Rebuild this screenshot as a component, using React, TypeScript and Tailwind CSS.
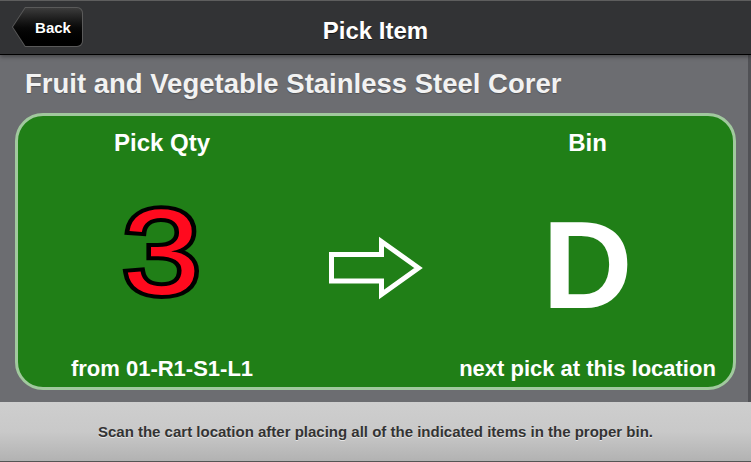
import React from "react";

export default function App() {
  return (
    <div className="w-[751px] h-[462px] flex flex-col overflow-hidden bg-[#6c6d71] font-['Liberation_Sans',Arial,sans-serif]">
      {/* Header */}
      <header className="h-[55px] shrink-0 bg-[#323335] border-t border-t-[#5e5e5e] border-b border-b-black grid grid-cols-[1fr_auto_1fr] shadow-[0_2px_4px_rgba(0,0,0,0.35)] relative z-10">
        <div className="pl-[12px] pt-[6px]">
          <div className="h-[40px] w-[71px] p-px bg-[#5a5a5a] rounded-r-[6px] [clip-path:polygon(13px_0,100%_0,100%_100%,13px_100%,0_50%)]">
            <div className="h-full w-full rounded-r-[5px] bg-gradient-to-b from-[#3c3c3c] via-[#0a0a0a] to-black [clip-path:polygon(12.4px_0,100%_0,100%_100%,12.4px_100%,0_50%)] flex items-center justify-center pl-[11px]">
              <span className="text-white font-bold text-[15px] leading-none [text-shadow:0_1px_0_#000]">Back</span>
            </div>
          </div>
        </div>
        <div className="pt-[16px]">
          <h1 className="text-white font-bold text-[24px] leading-[28px] [text-shadow:0_1px_0_#111]">Pick Item</h1>
        </div>
        <div />
      </header>

      {/* Main */}
      <main className="flex-1 border-r-[3px] border-r-[#505155] flex flex-col">
        <h2 className="pt-[14px] pl-[25px] text-[#f2f2f2] font-bold text-[27.5px] leading-[30px] whitespace-nowrap [text-shadow:0_1px_1px_rgba(0,0,0,0.25)]">
          Fruit and Vegetable Stainless Steel Corer
        </h2>
        <div className="mt-[14px] ml-[15px] w-[721px] h-[277px] rounded-[28px] border-[3px] border-[#a1c99e] bg-[#207f17] grid grid-cols-[288px_136px_291px] text-white font-bold">
          {/* Left column */}
          <div className="flex flex-col items-center">
            <div className="pt-[13px] text-[24px] leading-[28px]">Pick Qty</div>
            <div className="flex-1 flex items-end justify-center pb-[40px]">
              <span className="text-[121px] leading-[128px] font-normal text-[#ff0a1e] [-webkit-text-stroke:8px_black] [paint-order:stroke_fill] scale-x-[1.16] inline-block">
                3
              </span>
            </div>
            <div className="text-[22px] leading-[26px] pb-[5px] whitespace-nowrap">from 01-R1-S1-L1</div>
          </div>

          {/* Middle column */}
          <div className="flex justify-center pt-[120px]">
            <svg width="102" height="64" viewBox="0 0 102 64" className="translate-x-[3px]">
              <polygon
                points="5.5,18.5 55.5,18.5 55.5,5.5 92.5,32 55.5,58.5 55.5,45 5.5,45"
                fill="none"
                stroke="#ffffff"
                strokeWidth="5"
                strokeLinejoin="miter"
              />
            </svg>
          </div>

          {/* Right column */}
          <div className="flex flex-col items-center">
            <div className="pt-[13px] text-[24px] leading-[28px]">Bin</div>
            <div className="flex-1 flex items-end justify-center pb-[27px]">
              <span className="text-[125px] leading-[128px] font-bold">D</span>
            </div>
            <div className="text-[22px] leading-[26px] pb-[5px] whitespace-nowrap">next pick at this location</div>
          </div>
        </div>
      </main>

      {/* Footer */}
      <footer className="h-[60px] shrink-0 bg-gradient-to-b from-[#cecece] via-[#c9c9c9] to-[#b2b2b2] border-b border-b-[#555] text-center pt-[21px]">
        <p className="text-[#333] font-bold text-[15px] leading-[18px] [text-shadow:0_1px_0_rgba(255,255,255,0.6)]">
          Scan the cart location after placing all of the indicated items in the proper bin.
        </p>
      </footer>
    </div>
  );
}
